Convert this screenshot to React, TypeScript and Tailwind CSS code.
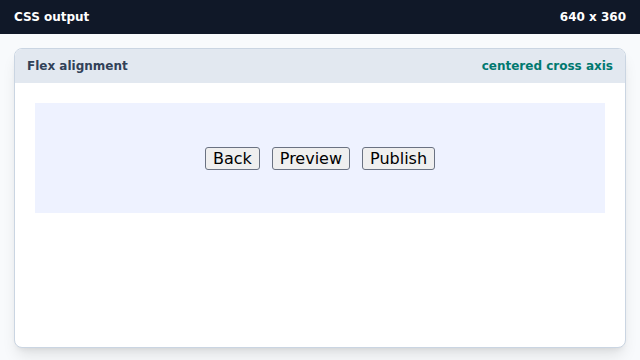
import React from 'react';

const buttons = ['Back', 'Preview', 'Publish'];

export default function App() {
  return (
    <div className="w-[640px] h-[360px] flex flex-col bg-slate-50 font-['DejaVu_Sans',sans-serif] overflow-hidden">
      <div className="h-[34px] shrink-0 flex items-center justify-between px-[14px] bg-gray-900 text-white text-[12px] font-bold">
        <span>CSS output</span>
        <span>640 x 360</span>
      </div>

      <div className="flex-1 px-[14px] pt-[14px] pb-[12px]">
        <div className="h-full flex flex-col bg-white border border-slate-300 rounded-lg shadow-lg overflow-hidden">
          <div className="h-[34px] shrink-0 flex items-center justify-between px-3 bg-slate-200 text-[12px] font-bold">
            <span className="text-slate-700">Flex alignment</span>
            <span className="text-teal-700">centered cross axis</span>
          </div>
          <div className="p-5">
            <div className="h-[110px] flex items-center justify-center gap-3 bg-indigo-50">
              {buttons.map((label) => (
                <button
                  key={label}
                  className="px-[7px] py-px border border-gray-500 rounded-[3px] bg-[#efefef] text-black text-base leading-[19px]"
                >
                  {label}
                </button>
              ))}
            </div>
          </div>
        </div>
      </div>
    </div>
  );
}
